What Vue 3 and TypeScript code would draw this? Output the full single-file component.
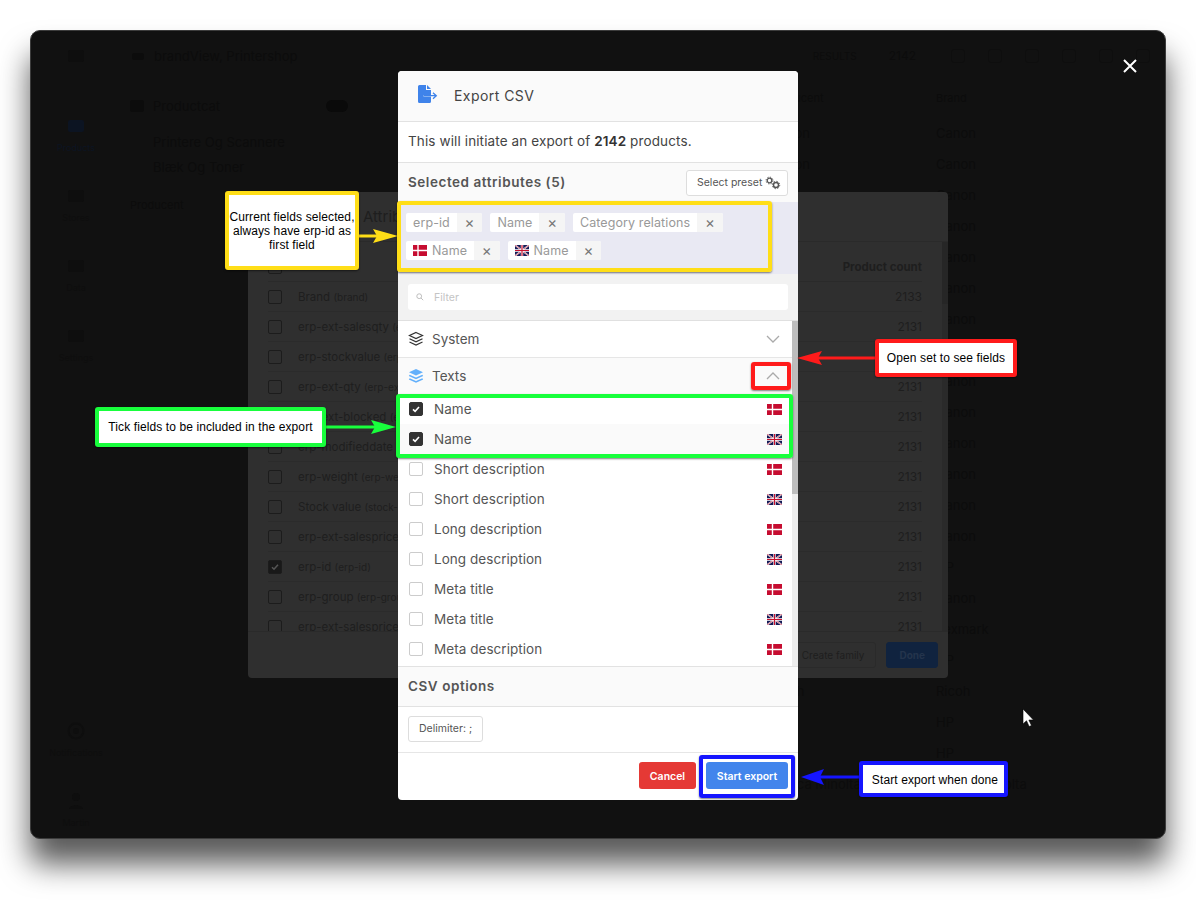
<script setup lang="ts">
interface Field { label: string; flag: 'dk' | 'uk'; checked: boolean }
const fields: Field[] = [
  { label: 'Name', flag: 'dk', checked: true },
  { label: 'Name', flag: 'uk', checked: true },
  { label: 'Short description', flag: 'dk', checked: false },
  { label: 'Short description', flag: 'uk', checked: false },
  { label: 'Long description', flag: 'dk', checked: false },
  { label: 'Long description', flag: 'uk', checked: false },
  { label: 'Meta title', flag: 'dk', checked: false },
  { label: 'Meta title', flag: 'uk', checked: false },
  { label: 'Meta description', flag: 'dk', checked: false },
]
const attrs = [
  ['Brand', '(brand)', '2133', false],
  ['erp-ext-salesqty', '(erp-ext-salesqty)', '2131', false],
  ['erp-stockvalue', '(erp-stockvalue)', '2131', false],
  ['erp-ext-qty', '(erp-ext-qty)', '2131', false],
  ['erp-ext-blocked', '(erp-ext-blocked)', '2131', false],
  ['erp-modifieddate', '(erp-modifieddate)', '2131', false],
  ['erp-weight', '(erp-weight)', '2131', false],
  ['Stock value', '(stock-value)', '2131', false],
  ['erp-ext-salesprice', '(erp-ext-salesprice)', '2131', false],
  ['erp-id', '(erp-id)', '2131', true],
  ['erp-group', '(erp-group)', '2131', false],
  ['erp-ext-salesprice', '(erp-ext-salesprice)', '2131', false],
] as const
const brands = ['Canon','Canon','Canon','Canon','Canon','Canon','Canon','Canon','Canon','Canon','Canon','Canon','Canon','Canon','HP','Canon','Lexmark','HP','Ricoh','HP','HP','Konica Minolta']
const navItems = ['', 'Products', 'Stores', 'Data', 'Settings']
</script>

<template>
  <div class="page">
    <div class="window">
      <div class="app">
        <aside class="side">
          <div v-for="(n, i) in navItems" :key="i" class="nav" :class="{ active: i === 1 }">
            <svg width="22" height="20" viewBox="0 0 22 20"><rect x="3" y="4" width="16" height="12" rx="2" fill="currentColor" /></svg>
            <span>{{ n }}</span>
          </div>
          <div class="nav-spacer"></div>
          <div class="nav">
            <svg width="22" height="20" viewBox="0 0 22 20"><circle cx="11" cy="10" r="7.500" fill="none" stroke="currentColor" stroke-width="2" /><circle cx="11" cy="10" r="3" fill="currentColor" /></svg>
            <span>Notifications</span>
          </div>
          <div class="nav">
            <svg width="22" height="20" viewBox="0 0 22 20"><circle cx="11" cy="6" r="4" fill="currentColor" /><path d="M4 18c0-5 14-5 14 0z" fill="currentColor" /></svg>
            <span>Martin</span>
          </div>
        </aside>
        <main class="main">
          <div class="topbar">
            <svg width="16" height="16" viewBox="0 0 16 16"><rect x="2" y="5" width="12" height="7" rx="2" fill="currentColor" /></svg>
            <span class="brand">brandView, Printershop</span>
            <span class="results">RESULTS</span>
            <span class="total">2142</span>
            <span v-for="n in 6" :key="n" class="ticon"></span>
          </div>
          <div class="content">
            <div class="tree">
              <div class="tree-head">
                <svg width="14" height="12" viewBox="0 0 14 12"><rect width="14" height="12" rx="2" fill="currentColor" /></svg>
                <span class="tree-title">Productcat</span>
                <span class="toggle"></span>
              </div>
              <div class="tree-item">Printere Og Scannere</div>
              <div class="tree-item">Blæk Og Toner</div>
              <div class="tree-sub">Producent</div>
            </div>
            <div class="cols">
              <div class="col col-maker">
                <div class="brand-head">Producent</div>
                <div v-for="(b, i) in brands" :key="i" class="brand-row">{{ b }}</div>
              </div>
              <div class="col">
                <div class="brand-head">Brand</div>
                <div v-for="(b, i) in brands" :key="i" class="brand-row">{{ b }}</div>
              </div>
            </div>
          </div>
        </main>
      </div>

      <section class="dialog">
        <div class="dialog-head">Attributes</div>
        <div class="dialog-body">
          <div class="dialog-table">
            <div class="th"><span class="dcheck"></span><span class="dname"></span><b>Product count</b></div>
            <div v-for="(a, i) in attrs" :key="i" class="tr">
              <span class="dcheck" :class="{ on: a[3] }">
                <svg v-if="a[3]" width="10" height="10" viewBox="0 0 10 10"><path d="M2 5.200l2 2 4-4.400" fill="none" stroke="#555" stroke-width="1.600" /></svg>
              </span>
              <span class="dname">{{ a[0] }} <small>{{ a[1] }}</small></span>
              <span class="dcount">{{ a[2] }}</span>
            </div>
          </div>
          <div class="dialog-scroll"><div class="dialog-thumb"></div></div>
        </div>
        <div class="dialog-foot">
          <span class="dbtn">Create family</span>
          <span class="dbtn primary">Done</span>
        </div>
      </section>

      <section class="modal">
        <header class="m-head">
          <svg width="22" height="20" viewBox="0 0 22 20">
            <path d="M1 1.500A1.500 1.500 0 0 1 2.500 0H9v5h5v5H6.500v1.400H14v5.100a1.500 1.500 0 0 1-1.500 1.500h-10A1.500 1.500 0 0 1 1 16.500z" fill="#3f83ea" />
            <path d="M10 0l4 4h-4z" fill="#3f83ea" />
            <path d="M6.500 10.700H19M16 7.700l3.300 3-3.300 3" fill="none" stroke="#3f83ea" stroke-width="1.300" />
          </svg>
          <span>Export CSV</span>
        </header>
        <p class="m-desc">This will initiate an export of <b>2142</b> products.</p>
        <div class="m-bar">
          <span>Selected attributes (5)</span>
          <button class="ghost preset">
            Select preset
            <svg width="16" height="14" viewBox="0 0 16 14" fill="none" stroke="#555">
              <circle cx="4.500" cy="4.500" r="2.300" stroke-width="1.300" />
              <circle cx="4.500" cy="4.500" r="3.400" stroke-dasharray="1.300 1.370" stroke-width="1" />
              <circle cx="11" cy="9" r="2.500" stroke-width="1.400" />
              <circle cx="11" cy="9" r="3.700" stroke-dasharray="1.400 1.500" stroke-width="1" />
            </svg>
          </button>
        </div>
        <div class="chips">
          <span class="chip"><span class="chip-l">erp-id</span><span class="chip-x">×</span></span>
          <span class="chip"><span class="chip-l">Name</span><span class="chip-x">×</span></span>
          <span class="chip"><span class="chip-l">Category relations</span><span class="chip-x">×</span></span>
          <span class="chip">
            <span class="chip-l">
              <svg class="flag" width="14" height="11" viewBox="0 0 14 11"><rect width="14" height="11" fill="#c60c30" /><path d="M0 5.500h14M5 0v11" stroke="#fff" stroke-width="1.400" /></svg>
              Name
            </span><span class="chip-x">×</span>
          </span>
          <span class="chip">
            <span class="chip-l">
              <svg class="flag" width="14" height="11" viewBox="0 0 14 11"><rect width="14" height="11" fill="#141a55" /><path d="M0 0l14 11M14 0L0 11" stroke="#fff" stroke-width="1.500" /><path d="M0 0l14 11M14 0L0 11" stroke="#c8102e" stroke-width=".6" /><path d="M0 5.500h14M7 0v11" stroke="#fff" stroke-width="2.400" /><path d="M0 5.500h14M7 0v11" stroke="#c8102e" stroke-width="1.200" /></svg>
              Name
            </span><span class="chip-x">×</span>
          </span>
        </div>
        <div class="filter">
          <div class="filter-input">
            <svg width="8" height="8" viewBox="0 0 10 10" fill="none" stroke="#bbb" stroke-width="1.200"><circle cx="4" cy="4" r="3" /><path d="M6.300 6.300L9 9" /></svg>
            <span>Filter</span>
          </div>
        </div>
        <div class="m-list">
          <div class="list-inner">
            <div class="set">
              <svg width="16" height="16" viewBox="0 0 16 16" fill="none" stroke="#333" stroke-width="1.200">
                <path d="M8 1.500l6.500 3L8 7.500l-6.500-3z" />
                <path d="M1.500 7.800L8 10.800l6.500-3" />
                <path d="M1.500 11L8 14l6.500-3" />
              </svg>
              <span>System</span>
              <svg class="chev" width="14" height="8" viewBox="0 0 14 8"><path d="M1 1l6 6 6-6" fill="none" stroke="#aaa" stroke-width="1.300" /></svg>
            </div>
            <div class="set open">
              <svg width="16" height="16" viewBox="0 0 16 16" fill="#63b0fb">
                <path d="M8 1l7 3.200L8 7.500 1 4.200z" />
                <path d="M1.700 6.700L8 9.600l6.300-2.900 .9 1.300L8 11.300.8 8z" />
                <path d="M1.700 10.200L8 13.100l6.300-2.900 .9 1.300L8 14.800.8 11.500z" />
              </svg>
              <span>Texts</span>
              <svg class="chev" width="14" height="8" viewBox="0 0 14 8"><path d="M1 7l6-6 6 6" fill="none" stroke="#aaa" stroke-width="1.300" /></svg>
            </div>
            <div v-for="(f, i) in fields" :key="i" class="row" :class="{ alt: i === 1 }">
              <span class="check" :class="{ on: f.checked }">
                <svg v-if="f.checked" width="10" height="10" viewBox="0 0 10 10"><path d="M2 5.300l2.100 2L8 3" fill="none" stroke="#fff" stroke-width="1.600" /></svg>
              </span>
              <span class="row-label">{{ f.label }}</span>
              <svg v-if="f.flag === 'dk'" width="15" height="11" viewBox="0 0 15 11"><rect width="15" height="11" fill="#c60c30" /><path d="M0 5.500h15M5.500 0v11" stroke="#fff" stroke-width="1.400" /></svg>
              <svg v-else width="15" height="11" viewBox="0 0 15 11"><rect width="15" height="11" fill="#141a55" /><path d="M0 0l15 11M15 0L0 11" stroke="#fff" stroke-width="1.500" /><path d="M0 0l15 11M15 0L0 11" stroke="#c8102e" stroke-width=".6" /><path d="M0 5.500h15M7.500 0v11" stroke="#fff" stroke-width="2.400" /><path d="M0 5.500h15M7.500 0v11" stroke="#c8102e" stroke-width="1.200" /></svg>
            </div>
          </div>
          <div class="scrollbar"><div class="thumb"></div></div>
        </div>
        <div class="m-bar csv"><span>CSV options</span></div>
        <div class="delim"><button class="ghost">Delimiter: ;</button></div>
        <footer class="m-foot">
          <button class="btn red">Cancel</button>
          <button class="btn blue">Start export</button>
        </footer>
      </section>

      <svg class="close" width="14" height="14" viewBox="0 0 14 14"><path d="M1 1l12 12M13 1L1 13" stroke="#fff" stroke-width="2" /></svg>
    </div>

    <svg class="arrows" width="1196" height="902" viewBox="0 0 1196 902">
      <path d="M359 236H386" stroke="#ffde17" stroke-width="3" />
      <path d="M373 229l25 7-25 7 4-7z" fill="#ffde17" />
      <path d="M875 358H810" stroke="#ff1b1b" stroke-width="3" />
      <path d="M822 351l-25 7 25 7-4-7z" fill="#ff1b1b" />
      <path d="M326 427H385" stroke="#18ff3c" stroke-width="3" />
      <path d="M371 420l25 7-25 7 4-7z" fill="#18ff3c" />
      <path d="M859 777H815" stroke="#1515ff" stroke-width="3" />
      <path d="M824 769l-23 8 23 8-4-8z" fill="#1515ff" />
      <path d="M1023 709v15l3.500-3.200 2.600 5.700 2.400-1-2.600-5.500h4.600z" fill="#fff" stroke="#000" stroke-width=".6" />
    </svg>

    <div class="frame f-yellow"></div>
    <div class="frame f-red"></div>
    <div class="frame f-green"></div>
    <div class="frame f-blue"></div>

    <div class="note n-yellow">Current fields selected, always have erp-id as first field</div>
    <div class="note n-red">Open set to see fields</div>
    <div class="note n-green">Tick fields to be included in the export</div>
    <div class="note n-blue">Start export when done</div>
  </div>
</template>

<style>
html, body { margin: 0; background: #fff; }
</style>

<style scoped>
* { box-sizing: border-box; }
.page {
  position: relative;
  width: 1196px;
  height: 902px;
  padding: 30px;
  overflow: hidden;
  background: #fff;
  font-family: Inter, "Noto Sans", sans-serif;
}
.window {
  position: relative;
  height: 809px;
  background: #111;
  border: 1px solid #3c3c3c;
  border-radius: 10px;
  box-shadow: 0 25px 30px rgba(0, 0, 0, 0.65);
  overflow: hidden;
}
.app { display: flex; height: 100%; color: #0c0c0c; font-size: 13px; }
.side {
  width: 90px;
  display: flex;
  flex-direction: column;
  align-items: center;
  padding-top: 15px;
  gap: 29px;
  color: #0e0e0e;
  font-size: 9px;
}
.nav { display: flex; flex-direction: column; align-items: center; gap: 6px; height: 41px; white-space: nowrap; }
.nav.active { color: #0c1422; }
.nav-spacer { flex: 1; }
.nav:last-child { margin-bottom: 6px; }
.main { flex: 1; padding: 0 0 0 9px; min-width: 0; }
.topbar { display: flex; align-items: center; height: 48px; gap: 8px; padding: 1px 15px 0 0; }
.brand { font-size: 13px; }
.results { margin-left: auto; font-size: 10px; }
.total { margin: 0 12px 0 24px; font-size: 12px; }
.ticon { width: 14px; height: 14px; border: 1px solid #0e0e0e; border-radius: 3px; margin-left: 15px; }
.content { display: flex; justify-content: space-between; padding-top: 10px; }
.tree { flex: none; padding-top: 8px; }
.tree-head { display: flex; align-items: center; height: 18px; width: 218px; gap: 9px; }
.tree-title { flex: 1; }
.toggle { width: 22px; height: 12px; border-radius: 6px; background: #0a0a0a; }
.tree-item { margin: 9px 0 0 23px; height: 16px; }
.tree-head + .tree-item { margin-top: 19px; }
.tree-sub { margin-top: 23px; font-size: 11px; }
.cols { display: flex; }
.col { width: 229px; flex: none; }
.col-maker { width: 166px; }
.brand-head { height: 35px; line-height: 18px; font-size: 11px; }
.brand-row { height: 31px; line-height: 18px; white-space: nowrap; }

.dialog {
  position: absolute;
  left: 217px;
  top: 161px;
  width: 700px;
  height: 486px;
  background: #2f2f2f;
  border-radius: 4px;
  display: flex;
  flex-direction: column;
  color: #1e1e1e;
  font-size: 12px;
}
.dialog-head { height: 50px; padding: 0 20px 0 115px; line-height: 50px; font-size: 15px; border-bottom: 1px solid #2a2a2a; flex: none; }
.dialog-body { flex: 1; min-height: 0; display: flex; overflow: hidden; }
.dialog-table { flex: 1; padding: 10px 20px 0 20px; overflow: hidden; }
.th { display: flex; align-items: center; height: 30px; font-size: 11.500px; border-bottom: 1px solid #2a2a2a; }
.tr { display: flex; align-items: center; height: 30px; border-bottom: 1px solid #2b2b2b; }
.dcheck {
  width: 14px; height: 14px; border: 1px solid #1c1c1c; border-radius: 2px;
  margin: 0 16px 0 0; display: inline-flex; align-items: center; justify-content: center; flex: none;
}
.dcheck.on { background: #191919; }
.dname { flex: 1; white-space: nowrap; overflow: hidden; font-size: 11.500px; }
.dname small { font-size: 10px; }
.dcount { font-size: 12px; }
.dialog-scroll { width: 6px; background: #2a2a2a; flex: none; }
.dialog-thumb { height: 62px; background: #262626; }
.dialog-foot {
  height: 47px; flex: none; display: flex; justify-content: flex-end; align-items: center;
  gap: 10px; padding-right: 10px; border-top: 1px solid #2a2a2a; font-size: 10px;
}
.dbtn { height: 26px; padding: 0 11px; line-height: 24px; border: 1px solid #2a2a2a; border-radius: 3px; }
.dbtn.primary { background: #10233f; padding: 0 12px; border-color: #10233f; color: #24344c; font-weight: 700; }

.close { position: absolute; right: 28px; top: 28px; }

.modal {
  position: absolute;
  left: 367px;
  top: 40px;
  width: 400px;
  height: 729px;
  background: #fff;
  border-radius: 4px;
  display: flex;
  flex-direction: column;
  overflow: hidden;
  color: #444;
  font-size: 14px;
}
.m-head {
  display: flex; align-items: center; height: 51px; flex: none;
  padding: 0 0 2px 19px; gap: 15px; background: #fafafa;
  border-bottom: 1px solid #e2e2e2; font-size: 14px; letter-spacing: .45px; color: #444;
}
.m-desc { margin: 0; height: 41px; flex: none; line-height: 38px; padding-left: 10px; border-bottom: 1px solid #e2e2e2; font-size: 13.500px; letter-spacing: .12px; }
.m-desc b { color: #333; font-weight: 600; }
.m-bar {
  display: flex; align-items: center; justify-content: space-between; flex: none;
  height: 39px; padding: 0 10px 2px; background: #fafafa; font-weight: 600; font-size: 13.500px; color: #555;
  letter-spacing: .55px;
}
.m-bar.csv { height: 41px; border-top: 1px solid #e2e2e2; border-bottom: 1px solid #e2e2e2; }
.ghost {
  font: inherit; font-size: 10.500px; font-weight: 400; letter-spacing: 0; color: #555;
  background: #fff; border: 1px solid #ddd; border-radius: 3px; height: 26px; padding: 0 10px 2px;
  display: inline-flex; align-items: center; gap: 3px;
}
.preset { width: 102px; padding: 0 0 0 10px; white-space: nowrap; margin-top: 2px; }
.chips {
  height: 72px; flex: none; background: #e9e9f3; padding: 11px 8px 0; display: flex; flex-wrap: wrap;
  gap: 9px 8px; align-content: flex-start; font-size: 12.500px; letter-spacing: .1px; color: #999;
}
.chip { display: inline-flex; height: 19px; background: #fff; border-radius: 2px; overflow: hidden; }
.chip-l { display: inline-flex; align-items: center; padding: 0 7px; gap: 5px; }
.chip-x { width: 25.500px; background: #f5f5f5; display: inline-flex; align-items: center; justify-content: center; color: #777; font-size: 15px; }
.filter { height: 47px; flex: none; background: #f2f2f2; padding: 10px 10px 0; border-bottom: 1px solid #e0e0e0; }
.filter-input {
  height: 26px; background: #fff; border-radius: 3px; display: flex; align-items: center; gap: 10px;
  padding-left: 8px; color: #c4c4c4; font-size: 10.500px;
}
.m-list { height: 345px; flex: none; display: flex; overflow: hidden; }
.list-inner { flex: 1; min-width: 0; }
.scrollbar { width: 6px; background: #ededed; flex: none; }
.thumb { height: 173px; background: #bdbdbd; }
.set { display: flex; align-items: center; height: 37px; padding: 0 12px 0 10px; gap: 8px; border-bottom: 1px solid #e6e6e6; font-size: 13.500px; color: #555; }
.set.open { background: #fafafa; border-bottom: 0; height: 36px; }
.chev { margin-left: auto; }
.row { display: flex; align-items: center; height: 30px; padding: 0 10px 0 11px; gap: 11px; font-size: 13.500px; color: #555; letter-spacing: .05px; }
.row.alt { background: #fafafa; }
.row-label { flex: 1; }
.check {
  width: 14px; height: 14px; border: 1px solid #ccc; border-radius: 2px; background: #fff;
  display: inline-flex; align-items: center; justify-content: center; flex: none;
}
.check.on { background: #333; border-color: #333; }
.delim { height: 46px; flex: none; padding: 9px 10px 0; border-bottom: 1px solid #e6e6e6; }
.m-foot { flex: 1; display: flex; align-items: flex-start; justify-content: flex-end; gap: 10px; padding: 9px 10px 0; }
.btn {
  font: inherit; font-size: 10.500px; font-weight: 600; color: #fff; border: 0; border-radius: 3px; height: 27px; padding: 1px 0 0;
}
.btn.red { background: #e53935; width: 57px; }
.btn.blue { background: #4285ec; width: 82px; }

.arrows { position: absolute; left: 0; top: 0; }
.frame, .note { position: absolute; border-radius: 3px; box-shadow: 0 1px 2px rgba(0, 0, 0, .5); }
.f-yellow { left: 397px; top: 201px; width: 375px; height: 71px; border: 4px solid #ffde17; }
.f-red { left: 751px; top: 362px; width: 40px; height: 28px; border: 4px solid #ff1b1b; }
.f-green { left: 396px; top: 394px; width: 397px; height: 64px; border: 4px solid #18ff3c; }
.f-blue { left: 699px; top: 755px; width: 96px; height: 43px; border: 4px solid #1515ff; }
.note {
  display: flex; align-items: center; justify-content: center; text-align: center;
  background: #fff; color: #000; font-family: "Liberation Sans", Arial, sans-serif; font-size: 12px; line-height: 14px;
  letter-spacing: .1px;
  border-style: solid; border-width: 4px;
}
.n-yellow { left: 225px; top: 191px; width: 134px; height: 79px; border-color: #ffde17; padding: 0; }
.n-red { left: 875px; top: 339px; width: 142px; height: 38px; border-color: #ff1b1b; }
.n-green { left: 95px; top: 407px; width: 231px; height: 40px; border-color: #18ff3c; }
.n-blue { left: 859px; top: 761px; width: 149px; height: 36px; border-color: #1515ff; padding: 1px 0 0 3px; }
</style>
